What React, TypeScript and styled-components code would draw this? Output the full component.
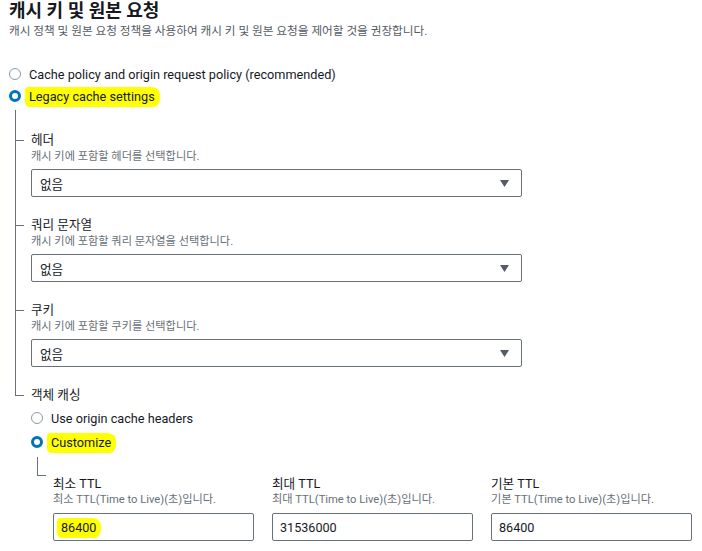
import React from "react";
import styled, { createGlobalStyle } from "styled-components";

const Global = createGlobalStyle`
  html, body { margin: 0; padding: 0; background: #ffffff; }
  body {
    font-family: Roboto, "Noto Sans CJK KR", sans-serif;
    color: #16191f;
    -webkit-font-smoothing: antialiased;
  }
`;

const LINE = "#687078";

const Page = styled.div`
  width: 702px;
  box-sizing: border-box;
  padding: 0 0 0 9px;
`;

const Title = styled.h2`
  margin: 0;
  font-size: 18px;
  line-height: 22px;
  font-weight: 700;
`;

const Subtitle = styled.p`
  margin: 1px 0 0;
  font-size: 11.65px;
  line-height: 16px;
  color: #545b64;
`;

const RadioGroup = styled.div<{ $top: number; $gap: number }>`
  display: flex;
  flex-direction: column;
  margin-top: ${(p) => p.$top}px;
  gap: ${(p) => p.$gap}px;
`;

const RadioRow = styled.div`
  display: flex;
  align-items: center;
  gap: 8px;
  height: 22px;
  font-size: 12.7px;
`;

const RadioDot = styled.span<{ $checked?: boolean }>`
  flex: none;
  width: 12px;
  height: 12px;
  box-sizing: border-box;
  border-radius: 50%;
  background: #ffffff;
  border: ${(p) => (p.$checked ? "3.5px solid #0073bb" : "1.5px solid #8d99a8")};
`;

const Mark = styled.span`
  background: #ffff00;
  padding: 2px 5px 3px 4px;
  margin: -2px -5px -3px -4px;
  border-radius: 3px 9px 6px 4px / 4px 7px 9px 5px;
`;

const Tree = styled.div<{ $top: number }>`
  margin-left: 6px;
  margin-top: ${(p) => p.$top}px;
  display: flex;
  flex-direction: column;
`;

const TreeLead = styled.div`
  height: 20px;
  border-left: 1px solid ${LINE};
`;

const Branch = styled.div`
  display: flex;
`;

const Connector = styled.div`
  flex: none;
  width: 9px;
  margin-right: 7px;
  display: flex;
  flex-direction: column;
`;

const Elbow = styled.div<{ $h: number }>`
  height: ${(p) => p.$h}px;
  border-left: 1px solid ${LINE};
  border-bottom: 1px solid ${LINE};
`;

const Stem = styled.div<{ $last?: boolean }>`
  flex: 1;
  border-left: 1px solid ${(p) => (p.$last ? "transparent" : LINE)};
`;

const BranchBody = styled.div<{ $pt: number; $pb: number }>`
  flex: 1;
  padding-top: ${(p) => p.$pt}px;
  padding-bottom: ${(p) => p.$pb}px;
`;

const FieldLabel = styled.div`
  font-size: 12.6px;
  line-height: 19px;
`;

const FieldDesc = styled.div`
  font-size: 11.2px;
  line-height: 16px;
  color: #687078;
`;

const Select = styled.div`
  margin-top: 4px;
  width: 491px;
  height: 28px;
  box-sizing: border-box;
  border: 1px solid ${LINE};
  border-radius: 2px;
  display: flex;
  align-items: center;
  justify-content: space-between;
  padding: 0 12px 0 8px;
  font-size: 12.6px;
`;

const Caret = styled.svg`
  width: 9px;
  height: 7px;
  fill: #545b64;
`;

const TtlGrid = styled.div`
  display: grid;
  grid-template-columns: repeat(3, 201px);
  column-gap: 18px;
`;

const TtlLabel = styled.div`
  font-size: 12.6px;
  line-height: 17px;
`;

const Input = styled.div`
  margin-top: 5px;
  height: 28px;
  box-sizing: border-box;
  border: 1px solid ${LINE};
  border-radius: 2px;
  display: flex;
  align-items: center;
  padding-left: 7px;
  font-size: 12.6px;
`;

type TreeItemProps = {
  tick: number;
  last?: boolean;
  pt?: number;
  pb?: number;
  children: React.ReactNode;
};

const TreeItem = ({ tick, last, pt = 0, pb = 0, children }: TreeItemProps) => (
  <Branch>
    <Connector>
      <Elbow $h={tick} />
      <Stem $last={last} />
    </Connector>
    <BranchBody $pt={pt} $pb={pb}>
      {children}
    </BranchBody>
  </Branch>
);

const SelectField = ({ label, desc }: { label: string; desc: string }) => (
  <>
    <FieldLabel>{label}</FieldLabel>
    <FieldDesc>{desc}</FieldDesc>
    <Select>
      <span>없음</span>
      <Caret viewBox="0 0 9 7">
        <path d="M0 0h9L4.5 7z" />
      </Caret>
    </Select>
  </>
);

const ttls = [
  { label: "최소 TTL", desc: "최소 TTL(Time to Live)(초)입니다.", value: "86400", mark: true },
  { label: "최대 TTL", desc: "최대 TTL(Time to Live)(초)입니다.", value: "31536000" },
  { label: "기본 TTL", desc: "기본 TTL(Time to Live)(초)입니다.", value: "86400" },
];

export default function App() {
  return (
    <Page>
      <Global />
      <Title>캐시 키 및 원본 요청</Title>
      <Subtitle>캐시 정책 및 원본 요청 정책을 사용하여 캐시 키 및 원본 요청을 제어할 것을 권장합니다.</Subtitle>

      <RadioGroup $top={24} $gap={0}>
        <RadioRow>
          <RadioDot />
          <span>Cache policy and origin request policy (recommended)</span>
        </RadioRow>
        <RadioRow>
          <RadioDot $checked />
          <Mark>Legacy cache settings</Mark>
        </RadioRow>
      </RadioGroup>

      <Tree $top={3}>
        <TreeLead />
        <TreeItem tick={10} pb={18}>
          <SelectField label="헤더" desc="캐시 키에 포함할 헤더를 선택합니다." />
        </TreeItem>
        <TreeItem tick={10} pb={18}>
          <SelectField label="쿼리 문자열" desc="캐시 키에 포함할 쿼리 문자열을 선택합니다." />
        </TreeItem>
        <TreeItem tick={10} pb={18}>
          <SelectField label="쿠키" desc="캐시 키에 포함할 쿠키를 선택합니다." />
        </TreeItem>
        <TreeItem tick={10} last>
          <FieldLabel>객체 캐싱</FieldLabel>
          <RadioGroup $top={3} $gap={2}>
            <RadioRow>
              <RadioDot />
              <span>Use origin cache headers</span>
            </RadioRow>
            <RadioRow>
              <RadioDot $checked />
              <Mark>Customize</Mark>
            </RadioRow>
          </RadioGroup>
          <Tree $top={4}>
            <TreeItem tick={18} pt={18} last>
              <TtlGrid>
                {ttls.map((t) => (
                  <div key={t.label}>
                    <TtlLabel>{t.label}</TtlLabel>
                    <FieldDesc>{t.desc}</FieldDesc>
                    <Input>{t.mark ? <Mark>{t.value}</Mark> : t.value}</Input>
                  </div>
                ))}
              </TtlGrid>
            </TreeItem>
          </Tree>
        </TreeItem>
      </Tree>
    </Page>
  );
}
